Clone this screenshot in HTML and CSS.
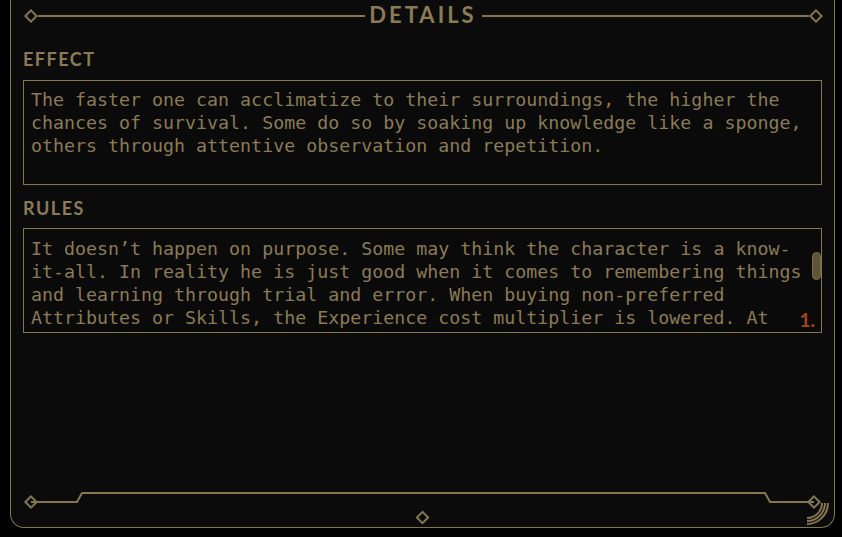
FILE: index.html
```html
<!DOCTYPE html>
<html lang="en">
<head>
<meta charset="utf-8">
<title>Details</title>
<link rel="stylesheet" href="styles.css">
</head>
<body>
<div class="panel">
  <div class="header">
    <svg class="diamond" width="14" height="14" viewBox="0 0 14 14"><path d="M7 1.4 L12.6 7 L7 12.6 L1.4 7 Z"/></svg>
    <div class="rule"></div>
    <h1 class="title">DETAILS</h1>
    <div class="rule"></div>
    <svg class="diamond" width="14" height="14" viewBox="0 0 14 14"><path d="M7 1.4 L12.6 7 L7 12.6 L1.4 7 Z"/></svg>
  </div>

  <div class="section">
    <h2 class="label">EFFECT</h2>
    <div class="box">
      <div class="box-text">The faster one can acclimatize to their surroundings, the higher the chances of survival. Some do so by soaking up knowledge like a sponge, others through attentive observation and repetition.</div>
    </div>
  </div>

  <div class="section rules">
    <h2 class="label">RULES</h2>
    <div class="box">
      <div class="box-text">It doesn’t happen on purpose. Some may think the character is a know-it-all. In reality he is just good when it comes to remembering things and learning through trial and error. When buying non-preferred Attributes or Skills, the Experience cost multiplier is lowered. At first glance, the character simply seems to learn faster than others.</div>
      <div class="thumb"></div>
      <span class="page-num">1.</span>
    </div>
  </div>

  <svg class="footer" width="823" height="38" viewBox="0 0 823 38">
    <path class="ln" d="M20 13 L66 13 L71 4 L754 4 L759 13 L803 13"/>
    <path class="dm" d="M20 7.4 L25.6 13 L20 18.6 L14.4 13 Z"/>
    <path class="dm" d="M803 7.4 L808.6 13 L803 18.6 L797.4 13 Z"/>
    <path class="dm" d="M411.5 22.9 L417.1 28.5 L411.5 34.1 L405.9 28.5 Z"/>
    <path class="arc" d="M811 14 A15 15 0 0 1 796 29"/>
    <path class="arc" d="M814 14 A18 18 0 0 1 796 32"/>
    <path class="arc" d="M817 14 A21 21 0 0 1 796 35"/>
  </svg>
</div>
</body>
</html>
```

FILE: styles.css
```css
* {
  box-sizing: border-box;
}

html, body {
  margin: 0;
  padding: 0;
  background: #000;
}

body {
  width: 842px;
  height: 537px;
  overflow: hidden;
}

.panel {
  margin-left: 10px;
  width: 825px;
  height: 528px;
  background: #0b0b0b;
  border: 1px solid #857650;
  border-top: none;
  border-radius: 0 0 14px 14px;
  display: flex;
  flex-direction: column;
  color: #8a7b55;
}

.header {
  height: 32px;
  display: flex;
  align-items: center;
  padding: 0 11px 0 13px;
}

.diamond {
  flex: none;
  display: block;
}

.diamond path,
.footer .dm {
  fill: none;
  stroke: #857650;
  stroke-width: 2;
}

.rule {
  flex: 1;
  height: 2px;
  background: #857650;
}

.title {
  margin: 0 5px 3px 4px;
  font-family: Lato, "Open Sans", sans-serif;
  font-weight: 700;
  font-size: 22px;
  line-height: 26px;
  letter-spacing: 3px;
  color: #8a7b55;
}

.section {
  padding: 0 12px;
  margin-top: 16px;
}

.section.rules {
  margin-top: 12px;
}

.label {
  margin: 0 0 10px 0;
  font-family: Lato, "Open Sans", sans-serif;
  font-weight: 700;
  font-size: 18px;
  line-height: 22px;
  letter-spacing: 1.5px;
  color: #8a7b55;
}

.box {
  position: relative;
  height: 105px;
  border: 1px solid #857650;
  background: #0a0a0a;
  padding: 7px 10px 0 7px;
}

.rules .box {
  padding-top: 8px;
}

.rules .label {
  margin-bottom: 9px;
}

.box-text {
  height: 92px;
  overflow: hidden;
  font-family: "DejaVu Sans Mono", "Liberation Mono", monospace;
  font-size: 18.3px;
  line-height: 23px;
  color: #8a7b55;
}

.thumb {
  position: absolute;
  right: 0;
  top: 23px;
  width: 9px;
  height: 28px;
  border-radius: 5px;
  background: #5e5437;
  border: 1px solid #7d6e48;
}

.page-num {
  position: absolute;
  right: 6px;
  bottom: 3px;
  font-family: Lato, "Open Sans", sans-serif;
  font-weight: 700;
  font-size: 19px;
  line-height: 19px;
  color: #a4481c;
}

.footer {
  display: block;
  margin-top: auto;
  flex: none;
}

.footer .ln,
.footer .arc {
  fill: none;
  stroke: #857650;
  stroke-width: 2;
}
```
